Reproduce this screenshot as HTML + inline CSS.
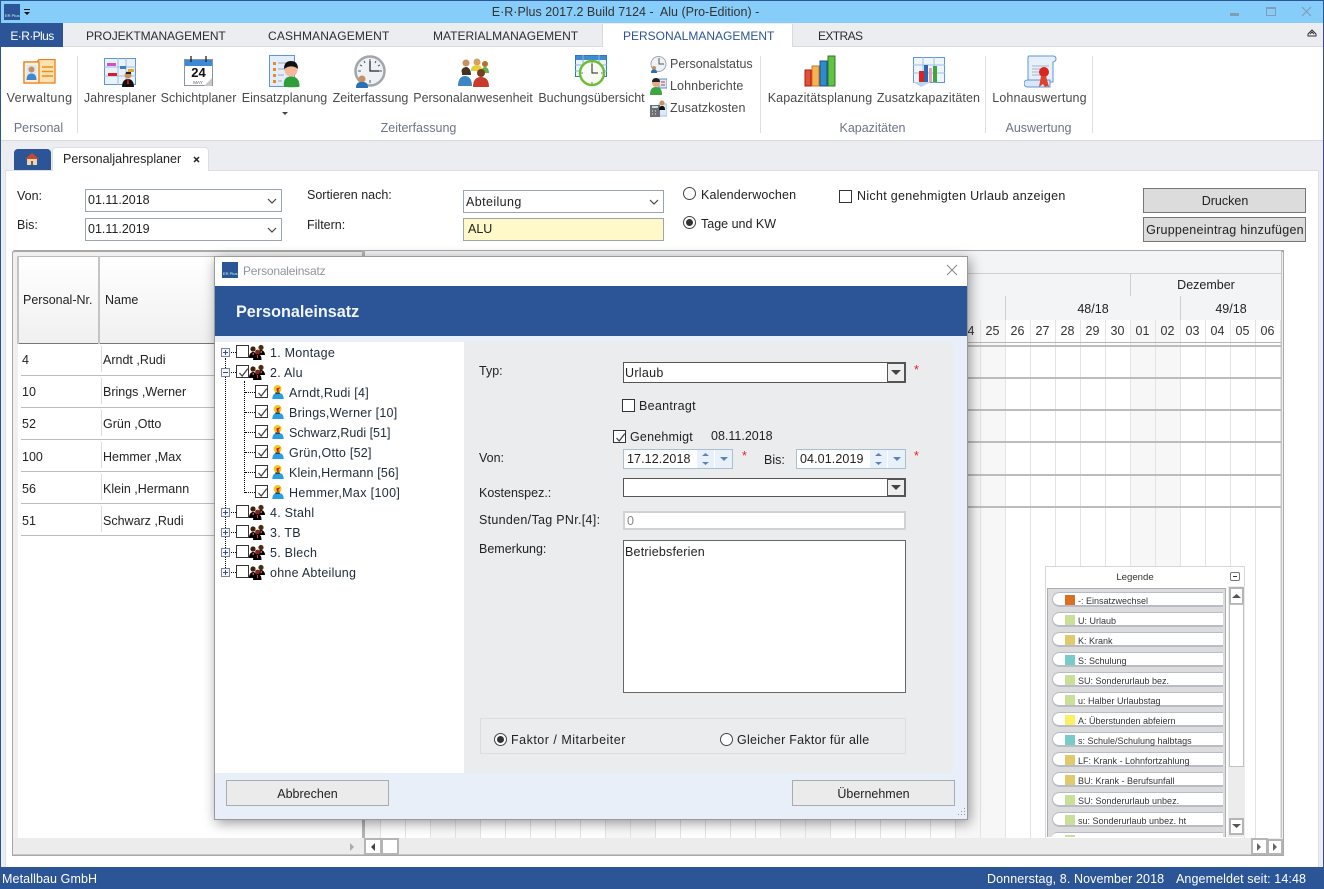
<!DOCTYPE html>
<html lang="de"><head><meta charset="utf-8"><title>E·R·Plus</title>
<style>
html,body{margin:0;padding:0}
body{width:1324px;height:889px;position:relative;overflow:hidden;background:#ebedf0;font-family:"Liberation Sans",sans-serif;font-size:12.5px;color:#222}
div,svg,span.t{position:absolute;box-sizing:border-box}
.t{white-space:nowrap;line-height:16px;height:16px}
.c{transform:translateX(-50%)}
.rb{color:#4a4a4a}
.gl{color:#6d7487}
.tb{color:#2d2d2d;font-size:12px}
.sep{width:1px;top:56px;height:77px;background:#dcdee2}
.in{background:#fff;border:1px solid #9aa5b1}
.cb{width:13px;height:13px;background:#fff;border:1px solid #333}
.cb svg{left:1px;top:1px}
.rad{width:13px;height:13px;border:1px solid #444;border-radius:50%;background:#fff}
.rad i{position:absolute;left:2px;top:2px;width:7px;height:7px;background:#333;border-radius:50%}
.vl{width:1px;background:#e3e3e3}
.hl{height:2px;background:#bcbcbc}
.pill{left:1052px;width:171px;height:15px;background:#fff;border-bottom:2px solid #b9bcc8;border-top:1px solid #b9bcc8;border-radius:8px 0 0 8px;border-left:1px solid #b9bcc8}
.sw{left:1065px;width:10px;height:10px}
.lg{left:1078px;font-size:9px;color:#333}
.d{text-align:center;width:25px;color:#333}
.dot{border-left:1px dotted #000}
.doth{border-top:1px dotted #000;height:1px}
.exp{left:221px;width:9px;height:9px;background:#f4f6fa;border:1px solid #7b8494}
.exp:before{content:"";position:absolute;left:1px;top:3px;width:5px;height:1px;background:#2f4f8f}
.exp.p:after{content:"";position:absolute;left:3px;top:1px;width:1px;height:5px;background:#2f4f8f}
.tr{color:#1d2b3a;letter-spacing:.25px}
.btn{background:#ebebeb;border:1px solid #a8acb2;text-align:center;color:#222}
.sbtn{background:#fff;border:2px solid #b5b5b5}
.st{color:#fff;letter-spacing:.1px}
</style></head>
<body>
<svg width="0" height="0" style="position:absolute">
<defs>
<symbol id="grp" viewBox="0 0 16 16"><circle cx="4" cy="5" r="2.600" fill="#3a2410"/><path d="M0 14c0-4 2-6 4-6s4 2 4 6z" fill="#000"/><circle cx="12" cy="3.500" r="2.600" fill="#4a2e12"/><path d="M8 11c0-3 2-5 4-5s4 2 4 5z" fill="#000"/><circle cx="8.500" cy="8" r="2.400" fill="#7a2a18"/><path d="M4 16c0-4 2-6 4.500-6s4 2 4 6z" fill="#000"/><rect x="3.500" y="9" width="1.500" height="2" fill="#e33"/><rect x="11.500" y="7" width="1.500" height="2" fill="#e33"/><rect x="8" y="11" width="1" height="3" fill="#e33"/></symbol>
<symbol id="per" viewBox="0 0 16 16"><circle cx="7.500" cy="4.500" r="4.500" fill="#f5c81e"/><path d="M1.500 16c0-5 2.500-7 6.500-7s6.500 2 6.500 7z" fill="#2a9ee0"/><path d="M6 4l5-1.500-3 3.500 2.500 1-3.500 1z" fill="#b81c1c"/><rect x="5" y="8.500" width="5" height="1.500" fill="#222"/></symbol>
<symbol id="chk" viewBox="0 0 11 11"><path d="M1.500 6l2.700 3L9.800 1.600" fill="none" stroke="#444" stroke-width="1.300"/></symbol>
</defs>
</svg>

<!-- title bar -->
<div style="left:0;top:0;width:1324px;height:23px;background:#87cdfa;border-top:1px solid #2b5597"></div>
<div style="left:4px;top:4px;width:16px;height:16px;background:#2b5597"></div>
<span class="t" style="left:5px;top:13px;font-size:4px;line-height:6px;height:6px;color:#cfe;">ER Plus</span>
<svg style="left:23px;top:9px" width="8" height="7"><rect x="1" y="0" width="6" height="1" fill="#111"/><path d="M1 3h6l-3 3z" fill="#111"/></svg>
<span class="t c" style="left:625.500px;top:4px;color:#333">E·R·Plus 2017.2 Build 7124 -&nbsp; Alu (Pro-Edition) -</span>
<div style="left:1230px;top:13px;width:9px;height:3px;background:#7f9db5"></div>
<div style="left:1266px;top:7px;width:10px;height:9px;border:1px solid #7f9db5;border-top-width:2px"></div>
<svg style="left:1301px;top:6px" width="11" height="11"><path d="M1 1l9 9M10 1l-9 9" stroke="#7f9db5" stroke-width="1.200"/></svg>

<!-- tabs -->
<div style="left:0;top:23px;width:1324px;height:24px;background:#ebedf0;border-bottom:1px solid #d8dade"></div>
<div style="left:1px;top:23px;width:62px;height:24px;background:#2b5597"></div>
<span class="t c" style="left:32px;top:28px;color:#fff;font-size:12px;letter-spacing:-.6px">E·R·Plus</span>
<span class="t tb" style="left:86px;top:28px;letter-spacing:-.1px">PROJEKTMANAGEMENT</span>
<span class="t tb" style="left:268px;top:28px;letter-spacing:.15px">CASHMANAGEMENT</span>
<span class="t tb" style="left:433px;top:28px">MATERIALMANAGEMENT</span>
<div style="left:602px;top:24px;width:191px;height:24px;background:#fff;border-left:1px solid #d8dade;border-right:1px solid #d8dade"></div>
<span class="t tb" style="left:623px;top:28px;color:#2b5597">PERSONALMANAGEMENT</span>
<span class="t tb" style="left:818px;top:28px;letter-spacing:-.6px">EXTRAS</span>
<svg style="left:1307px;top:29px" width="10" height="9"><path d="M1 5l4-4 4 4v2H1z" fill="none" stroke="#333"/><path d="M3 5l2-2 2 2" fill="none" stroke="#333"/></svg>

<!-- ribbon -->
<div style="left:1px;top:47px;width:1322px;height:94px;background:#fff;border-bottom:1px solid #d8dade"></div>
<div class="sep" style="left:77px"></div><div class="sep" style="left:760px"></div><div class="sep" style="left:985px"></div><div class="sep" style="left:1092px"></div>

<svg style="left:23px;top:59px" width="33" height="25" viewBox="0 0 33 25"><path d="M1 3h13l2-2.500h16V24H1z" fill="#fbe2ae" stroke="#ea7f1e" stroke-width="1.300"/><rect x="1" y="3" width="15" height="21" fill="#fdf0d4" stroke="#ea7f1e" stroke-width="1.300"/><rect x="3.500" y="6" width="10" height="15" fill="#d7e7f6"/><circle cx="8.500" cy="10.500" r="3" fill="#c98c60"/><path d="M3.500 21c0-5 2.500-6.500 5-6.500s5 1.500 5 6.500z" fill="#3f88cc"/><path d="M19 8h11M19 12.500h11M19 17h11" stroke="#ea8f20" stroke-width="1.600"/></svg>
<svg style="left:104px;top:58px" width="32" height="29" viewBox="0 0 32 29"><rect x=".5" y=".5" width="31" height="26" fill="#e9f2fb" stroke="#5f97d2"/><path d="M0 9h32M0 18h32M14 0v27M22 0v27" stroke="#9dbfe3"/><rect x="3" y="5" width="9" height="3" fill="#d84fc0"/><rect x="16" y="8" width="6" height="3" fill="#3d7fc2"/><rect x="24" y="11" width="6" height="3" fill="#e5a72b"/><rect x="4" y="15" width="9" height="3" fill="#d81e1e"/><circle cx="24" cy="17" r="3.500" fill="#c9905f"/><path d="M22 14h5v2h-5z" fill="#222"/><path d="M18 29c0-6 3-8 6-8s6 2 6 8z" fill="#111"/><path d="M23.500 21h1l.6 5h-2.200z" fill="#c22"/></svg>
<svg style="left:184px;top:56px" width="29" height="31" viewBox="0 0 29 31"><rect x=".5" y="3.500" width="28" height="26" fill="#fff" stroke="#8a95a1"/><rect x="1" y="4" width="27" height="6" fill="#3f88d6"/><path d="M7 0v6M22 0v6" stroke="#222" stroke-width="1.300"/><path d="M20 30l8-8v8z" fill="#c8c8c8"/><text x="14.500" y="21" text-anchor="middle" font-family="Liberation Sans" font-weight="bold" font-size="13" fill="#111">24</text><text x="14" y="28" text-anchor="middle" font-family="Liberation Sans" font-size="4.500" fill="#555">MAY</text></svg>
<svg style="left:269px;top:55px" width="33" height="33" viewBox="0 0 33 33"><rect x=".5" y=".5" width="25" height="31" fill="#e2eefb" stroke="#5f97d2"/><g fill="#f08a20"><rect x="4" y="7" width="3" height="3"/><rect x="4" y="13" width="3" height="3"/><rect x="4" y="19" width="3" height="3"/><rect x="4" y="25" width="3" height="3"/></g><path d="M9 8h12M9 14h8M9 20h6M9 26h4" stroke="#9aa5b1"/><circle cx="22" cy="15" r="6.500" fill="#f3b79a"/><path d="M15 14c0-6 3-8 7-8s7 2 7 8c-3-3-9-4-14 0z" fill="#111"/><path d="M15 31.500c-1-8 3-10 7-10s9 2 8.500 10c0 1-15.500 1-15.500 0z" fill="#2f9e3a"/></svg>
<svg style="left:354px;top:55px" width="32" height="33" viewBox="0 0 32 33"><circle cx="16" cy="16" r="14.500" fill="#eef2f6" stroke="#a0a6ac" stroke-width="2.500"/><path d="M16 4v3M16 25v3M4 16h3M25 16h3M10 6l1 2M22 6l-1 2M6 10l2 1M26 10l-2 1" stroke="#555"/><path d="M16 6v10h9" fill="none" stroke="#222" stroke-width="1.200"/><circle cx="8" cy="24" r="3.500" fill="#c9905f"/><path d="M2 33c0-5 2-6 6-6s6 1 6 6z" fill="#2a70b8"/></svg>
<svg style="left:457px;top:57px" width="32" height="30" viewBox="0 0 32 30"><circle cx="9" cy="6" r="3.500" fill="#c9905f"/><circle cx="20" cy="5" r="3.500" fill="#d6a060"/><circle cx="28" cy="7" r="3" fill="#b5702a"/><path d="M5 18c0-6 2-8 4-8s5 2 5 8z" fill="#333"/><path d="M14 14c0-5 3-6 6-6s5 1 5 6z" fill="#e6cf3a"/><path d="M24 16c0-4 2-6 4-6s4 2 4 6z" fill="#66b04a"/><circle cx="8" cy="14" r="3.500" fill="#4a3020"/><path d="M1 29c0-7 3-10 7-10s7 3 7 10z" fill="#3c86c6"/><circle cx="24" cy="16" r="4" fill="#7a3f20"/><path d="M16 30c0-7 3-10 8-10s8 3 8 10z" fill="#c93a2a"/></svg>
<svg style="left:575px;top:55px" width="33" height="32" viewBox="0 0 33 32"><rect x=".5" y=".5" width="31" height="21" fill="#e9f3fb" stroke="#2f78bd"/><rect x="1" y="1" width="30" height="4" fill="#3f8ad0"/><path d="M0 10h32M0 16h32M8 0v21M24 0v21" stroke="#88b5dd"/><circle cx="17" cy="18" r="12" fill="#f8fbf4" stroke="#6cbc35" stroke-width="2.400"/><path d="M17 9v9h6" fill="none" stroke="#222"/><path d="M17 7.500v1.500M17 27v1.500M6.500 18h1.500M26 18h1.500" stroke="#666"/></svg>
<svg style="left:650px;top:56px" width="17" height="17" viewBox="0 0 17 17"><circle cx="8.500" cy="8" r="7.500" fill="#eef2f6" stroke="#a0a6ac"/><path d="M9 2v6h5" fill="none" stroke="#555"/><circle cx="4" cy="12" r="2" fill="#c9905f"/><path d="M1 17c0-3 1-3.500 3-3.500s3 .5 3 3.500z" fill="#2a70b8"/></svg>
<svg style="left:650px;top:78px" width="17" height="17" viewBox="0 0 17 17"><rect x="9" y="1" width="8" height="9" fill="#dce9f8" stroke="#5a8fd0"/><path d="M11 4h4M11 7h4" stroke="#c33"/><circle cx="6" cy="5" r="4" fill="#e5ab8a"/><path d="M2 4c0-3 2-4 4-4s4 1 4 4z" fill="#222"/><path d="M0 17c0-6 2-8 6-8s6 2 6 8z" fill="#3fa63f"/></svg>
<svg style="left:650px;top:100px" width="17" height="17" viewBox="0 0 17 17"><rect x="9" y="4" width="8" height="12" fill="#dce9f8" stroke="#9dbfe3"/><rect x="0" y="5" width="10" height="12" fill="#6c6f73"/><path d="M2 7h6" stroke="#cde" stroke-width="2"/><path d="M2 11h1M5 11h1M2 14h1M5 14h1" stroke="#eee"/><circle cx="12" cy="3" r="2.500" fill="#c9905f"/><path d="M9 10c0-3 1-4 3-4s3 1 3 4z" fill="#111"/></svg>
<svg style="left:804px;top:55px" width="33" height="32" viewBox="0 0 33 32"><rect x="1" y="15" width="6" height="16" fill="#e2503c" stroke="#a81c14"/><rect x="8" y="11" width="7" height="20" fill="#f7b256" stroke="#c97a1c"/><rect x="16" y="6" width="7" height="25" fill="#2f8ccc" stroke="#174f8c"/><rect x="24" y="1" width="7" height="30" fill="#62c244" stroke="#2f7a24"/></svg>
<svg style="left:913px;top:57px" width="33" height="30" viewBox="0 0 33 30"><rect x=".5" y=".5" width="31" height="25" fill="#eef5fc" stroke="#5f97d2"/><path d="M0 8h32M0 16h32M10 0v26M21 0v26" stroke="#9dc0e6"/><rect x="6" y="14" width="5" height="11" fill="#d22"/><rect x="11" y="8" width="4" height="17" fill="#2d66b5"/><rect x="16" y="11" width="3" height="14" fill="#e5a0c0"/><rect x="20" y="9" width="4" height="16" fill="#3aa83a"/><path d="M0 25l8 5 10-5z" fill="#bcd5f0"/></svg>
<svg style="left:1024px;top:55px" width="33" height="33" viewBox="0 0 33 33"><path d="M5 1h24c2 0 3 1 3 3s-2 3-3 3v20H4V3c0-1 0-2 1-2z" fill="#e7f0fa" stroke="#5f97d2"/><path d="M0 28c0-2 2-3 4-3h22v7H3c-2 0-3-2-3-4z" fill="#d6e7f8" stroke="#5f97d2"/><path d="M8 11h17M8 14h12M8 17h10M8 20h10" stroke="#aab4c2"/><circle cx="20" cy="17" r="5" fill="#d7261e"/><path d="M17 21l-2 11 4-3 2 3 2-1 2 1-3-11z" fill="#e0412c"/></svg>

<span class="t c rb" style="left:39.500px;top:90px;letter-spacing:.4px">Verwaltung</span>
<span class="t c rb" style="left:120px;top:90px">Jahresplaner</span>
<span class="t c rb" style="left:198.500px;top:90px">Schichtplaner</span>
<span class="t c rb" style="left:284.500px;top:90px">Einsatzplanung</span>
<svg style="left:282px;top:112px" width="6" height="4"><path d="M0 0h6l-3 3z" fill="#444"/></svg>
<span class="t c rb" style="left:370.500px;top:90px">Zeiterfassung</span>
<span class="t c rb" style="left:473px;top:90px">Personalanwesenheit</span>
<span class="t c rb" style="left:591.500px;top:90px">Buchungsübersicht</span>
<span class="t rb" style="left:670px;top:56px">Personalstatus</span>
<span class="t rb" style="left:670px;top:78px;letter-spacing:.1px">Lohnberichte</span>
<span class="t rb" style="left:670px;top:100px;letter-spacing:.1px">Zusatzkosten</span>
<span class="t c rb" style="left:820px;top:90px;letter-spacing:.1px">Kapazitätsplanung</span>
<span class="t c rb" style="left:928.500px;top:90px;letter-spacing:.1px">Zusatzkapazitäten</span>
<span class="t c rb" style="left:1039.500px;top:90px;letter-spacing:.15px">Lohnauswertung</span>
<span class="t c gl" style="left:38.500px;top:120px">Personal</span>
<span class="t c gl" style="left:418.500px;top:120px">Zeiterfassung</span>
<span class="t c gl" style="left:872.500px;top:120px">Kapazitäten</span>
<span class="t c gl" style="left:1038.500px;top:120px">Auswertung</span>

<!-- document tabs -->
<div style="left:14px;top:149px;width:37px;height:21px;background:#2b5597;border-radius:4px 4px 0 0"></div>
<svg style="left:24px;top:152px" width="16" height="14" viewBox="0 0 16 14"><path d="M1 7l7-6 7 6z" fill="#c8482c"/><rect x="3" y="7" width="10" height="6" fill="#e8d8b8"/><rect x="7" y="9" width="2" height="4" fill="#8a5a30"/></svg>
<div style="left:52px;top:147px;width:157px;height:24px;background:#fff;border:1px solid #dcdee2;border-bottom:0;border-radius:4px 4px 0 0;z-index:2"></div>
<span class="t" style="left:63px;top:151px;color:#222;z-index:3">Personaljahresplaner</span>
<svg style="left:193px;top:156px;z-index:3" width="7" height="7"><path d="M1 1l5 5M6 1L1 6" stroke="#222" stroke-width="1.500"/></svg>

<!-- page -->
<div style="left:5px;top:170px;width:1314px;height:697px;background:#fff;border-top:1px solid #dcdee2;border-right:1px solid #dcdee2;border-left:1px solid #dcdee2"></div>

<span class="t" style="left:17px;top:188px">Von:</span>
<span class="t" style="left:17px;top:217px">Bis:</span>
<div class="in" style="left:85px;top:189px;width:197px;height:23px"></div>
<span class="t" style="left:88px;top:192px">01.11.2018</span>
<svg style="left:267px;top:198px" width="10" height="6"><path d="M1 1l4 4 4-4" fill="none" stroke="#444" stroke-width="1.200"/></svg>
<div class="in" style="left:85px;top:218px;width:197px;height:23px"></div>
<span class="t" style="left:88px;top:221px">01.11.2019</span>
<svg style="left:267px;top:227px" width="10" height="6"><path d="M1 1l4 4 4-4" fill="none" stroke="#444" stroke-width="1.200"/></svg>
<span class="t" style="left:307px;top:187px">Sortieren nach:</span>
<span class="t" style="left:307px;top:217px">Filtern:</span>
<div class="in" style="left:463px;top:190px;width:201px;height:23px"></div>
<span class="t" style="left:466px;top:194px;letter-spacing:.4px">Abteilung</span>
<svg style="left:649px;top:199px" width="10" height="6"><path d="M1 1l4 4 4-4" fill="none" stroke="#444" stroke-width="1.200"/></svg>
<div class="in" style="left:463px;top:218px;width:201px;height:23px;background:#fff8c9"></div>
<span class="t" style="left:468px;top:221px">ALU</span>
<div class="rad" style="left:683px;top:187px"></div>
<span class="t" style="left:701px;top:187px;letter-spacing:.15px">Kalenderwochen</span>
<div class="rad" style="left:683px;top:216px"><i></i></div>
<span class="t" style="left:701px;top:216px">Tage und KW</span>
<div class="cb" style="left:839px;top:190px"></div>
<span class="t" style="left:857px;top:188px;letter-spacing:.3px">Nicht genehmigten Urlaub anzeigen</span>
<div style="left:1143px;top:188px;width:163px;height:25px;background:#dcdcdc;border:1px solid #777"></div>
<span class="t c" style="left:1225px;top:193px">Drucken</span>
<div style="left:1143px;top:217px;width:163px;height:25px;background:#dcdcdc;border:1px solid #777"></div>
<span class="t c" style="left:1225px;top:222px;letter-spacing:.25px">Gruppeneintrag hinzufügen</span>

<!-- grid container -->
<div style="left:12px;top:250px;width:1272px;height:606px;background:#f0f0f0;border:1px solid #a8a8a8;border-top:2px solid #a8a8a8;border-radius:3px 0 0 0"></div>
<div style="left:18px;top:256px;width:344px;height:88px;background:linear-gradient(#fff,#f0f0f0);border-top:1px solid #bbb;border-bottom:1px solid #777"></div>
<div style="left:17px;top:256px;width:2px;height:88px;background:#c4c4c4"></div>
<div style="left:98px;top:256px;width:2px;height:88px;background:#c4c4c4"></div>
<span class="t" style="left:23px;top:292px">Personal-Nr.</span>
<span class="t" style="left:105px;top:292px">Name</span>
<div style="left:18px;top:344px;width:344px;height:494px;background:#fff"></div>
<div style="left:362px;top:250px;width:3px;height:588px;background:#b4b4b4"></div>
<div style="left:365px;top:251px;width:917px;height:91px;background:#f3f4f6"></div>
<div style="left:365px;top:273px;width:916px;height:1px;background:#cfcfcf"></div>
<div style="left:1130px;top:273px;width:1px;height:23px;background:#cfcfcf"></div>
<div style="left:1005px;top:296px;width:1px;height:24px;background:#cfcfcf"></div>
<div style="left:1180px;top:296px;width:1px;height:24px;background:#cfcfcf"></div>
<div style="left:1281px;top:251px;width:1px;height:587px;background:#c4c4c4"></div>
<span class="t c" style="left:1206px;top:277px">Dezember</span>
<span class="t c" style="left:1093px;top:301px">48/18</span>
<span class="t c" style="left:1231px;top:301px">49/18</span>

<!-- right grid -->
<div style="left:365px;top:320px;width:916px;height:518px;background:#fff"></div>
<div style="left:365px;top:320px;width:16px;height:518px;background:#f7f7f7"></div>
<div style="left:430px;top:320px;width:50px;height:518px;background:#f7f7f7"></div>
<div style="left:605px;top:320px;width:50px;height:518px;background:#f7f7f7"></div>
<div style="left:780px;top:320px;width:50px;height:518px;background:#f7f7f7"></div>
<div style="left:955px;top:320px;width:50px;height:518px;background:#f7f7f7"></div>
<div style="left:1130px;top:320px;width:50px;height:518px;background:#f7f7f7"></div>
<div style="left:380px;top:320px;width:901px;height:518px;background:repeating-linear-gradient(90deg,#e3e3e3 0,#e3e3e3 1px,transparent 1px,transparent 25px)"></div>
<div style="left:365px;top:342px;width:916px;height:1px;background:#b5b5b5"></div>
<div class="hl" style="left:365px;top:345px;width:916px"></div>
<div class="hl" style="left:365px;top:377px;width:916px"></div>
<div class="hl" style="left:365px;top:409px;width:916px"></div>
<div class="hl" style="left:365px;top:441px;width:916px"></div>
<div class="hl" style="left:365px;top:474px;width:916px"></div>
<div class="hl" style="left:365px;top:506px;width:916px"></div>
<span class="t d" style="left:955px;top:323px">24</span>
<span class="t d" style="left:980px;top:323px">25</span>
<span class="t d" style="left:1005px;top:323px">26</span>
<span class="t d" style="left:1030px;top:323px">27</span>
<span class="t d" style="left:1055px;top:323px">28</span>
<span class="t d" style="left:1080px;top:323px">29</span>
<span class="t d" style="left:1105px;top:323px">30</span>
<span class="t d" style="left:1130px;top:323px">01</span>
<span class="t d" style="left:1155px;top:323px">02</span>
<span class="t d" style="left:1180px;top:323px">03</span>
<span class="t d" style="left:1205px;top:323px">04</span>
<span class="t d" style="left:1230px;top:323px">05</span>
<span class="t d" style="left:1255px;top:323px">06</span>

<!-- left rows -->
<div style="left:21px;top:375px;width:340px;height:1px;background:#bdbdbd"></div>
<div style="left:21px;top:407px;width:340px;height:1px;background:#bdbdbd"></div>
<div style="left:21px;top:439px;width:340px;height:1px;background:#bdbdbd"></div>
<div style="left:21px;top:471px;width:340px;height:1px;background:#bdbdbd"></div>
<div style="left:21px;top:503px;width:340px;height:1px;background:#bdbdbd"></div>
<div style="left:21px;top:535px;width:340px;height:1px;background:#bdbdbd"></div>
<div style="left:101px;top:346px;width:1px;height:190px;background:repeating-linear-gradient(180deg,#dcdcdc 0,#dcdcdc 26px,transparent 26px,transparent 32px)"></div>
<span class="t" style="left:22px;top:352px">4</span><span class="t" style="left:103px;top:352px">Arndt ,Rudi</span>
<span class="t" style="left:22px;top:384px">10</span><span class="t" style="left:103px;top:384px">Brings ,Werner</span>
<span class="t" style="left:22px;top:416px">52</span><span class="t" style="left:103px;top:416px">Grün ,Otto</span>
<span class="t" style="left:22px;top:449px">100</span><span class="t" style="left:103px;top:449px">Hemmer ,Max</span>
<span class="t" style="left:22px;top:481px">56</span><span class="t" style="left:103px;top:481px">Klein ,Hermann</span>
<span class="t" style="left:22px;top:513px">51</span><span class="t" style="left:103px;top:513px">Schwarz ,Rudi</span>

<!-- scrollbars -->
<div style="left:13px;top:838px;width:1270px;height:17px;background:#ececec;border-bottom:1px solid #c8c8c8"></div>
<svg style="left:350px;top:843px" width="5" height="8"><path d="M0 0l4 4-4 4z" fill="#aaa"/></svg>
<div class="sbtn" style="left:364px;top:838px;width:18px;height:17px"></div>
<svg style="left:371px;top:843px" width="5" height="8"><path d="M4 0L0 4l4 4z" fill="#444"/></svg>
<div class="sbtn" style="left:381px;top:838px;width:18px;height:17px"></div>
<div class="sbtn" style="left:1251px;top:838px;width:17px;height:17px"></div>
<svg style="left:1257px;top:843px" width="5" height="8"><path d="M0 0l4 4-4 4z" fill="#666"/></svg>
<div class="sbtn" style="left:1267px;top:839px;width:16px;height:16px"></div>
<svg style="left:1273px;top:843px" width="5" height="8"><path d="M0 0l4 4-4 4z" fill="#666"/></svg>

<!-- legend -->
<div style="left:1045px;top:566px;width:200px;height:272px;background:#fff;border:1px solid #d8d8d8;border-bottom:0"></div>
<span class="t c" style="left:1135px;top:570px;font-size:9.600px;color:#333">Legende</span>
<div style="left:1230px;top:572px;width:10px;height:9px;border:1px solid #777;border-radius:2px;background:#fff"></div>
<div style="left:1233px;top:576px;width:4px;height:1px;background:#333"></div>
<div style="left:1047px;top:588px;width:179px;height:249px;background:#dcdcdc;border:1px solid #a8acb4;border-bottom:0;overflow:hidden"></div>
<div style="left:1228px;top:586px;width:17px;height:251px;background:#ececec"></div>
<div class="sbtn" style="left:1229px;top:587px;width:15px;height:18px"></div>
<svg style="left:1232px;top:594px" width="9" height="5"><path d="M0 4l4.500-4L9 4z" fill="#555"/></svg>
<div style="left:1229px;top:604px;width:15px;height:163px;background:#fff;border:1px solid #c0c0c0"></div>
<div class="sbtn" style="left:1229px;top:818px;width:15px;height:17px"></div>
<svg style="left:1232px;top:824px" width="9" height="5"><path d="M0 0l4.500 4L9 0z" fill="#555"/></svg>

<div class="pill" style="top:592px"></div><div class="sw" style="top:595px;background:#d96f20"></div><span class="t lg" style="top:593px">-: Einsatzwechsel</span>
<div class="pill" style="top:612px"></div><div class="sw" style="top:615px;background:#cadf98"></div><span class="t lg" style="top:613px">U: Urlaub</span>
<div class="pill" style="top:632px"></div><div class="sw" style="top:635px;background:#dfca6c"></div><span class="t lg" style="top:633px">K: Krank</span>
<div class="pill" style="top:652px"></div><div class="sw" style="top:655px;background:#78cbc9"></div><span class="t lg" style="top:653px">S: Schulung</span>
<div class="pill" style="top:672px"></div><div class="sw" style="top:675px;background:#cadf98"></div><span class="t lg" style="top:673px">SU: Sonderurlaub bez.</span>
<div class="pill" style="top:692px"></div><div class="sw" style="top:695px;background:#cadf98"></div><span class="t lg" style="top:693px">u: Halber Urlaubstag</span>
<div class="pill" style="top:712px"></div><div class="sw" style="top:715px;background:#fbf060"></div><span class="t lg" style="top:713px">A: Überstunden abfeiern</span>
<div class="pill" style="top:732px"></div><div class="sw" style="top:735px;background:#78cbc9"></div><span class="t lg" style="top:733px">s: Schule/Schulung halbtags</span>
<div class="pill" style="top:752px"></div><div class="sw" style="top:755px;background:#dfca6c"></div><span class="t lg" style="top:753px">LF: Krank - Lohnfortzahlung</span>
<div class="pill" style="top:772px"></div><div class="sw" style="top:775px;background:#dfca6c"></div><span class="t lg" style="top:773px">BU: Krank - Berufsunfall</span>
<div class="pill" style="top:792px"></div><div class="sw" style="top:795px;background:#cadf98"></div><span class="t lg" style="top:793px">SU: Sonderurlaub unbez.</span>
<div class="pill" style="top:812px"></div><div class="sw" style="top:815px;background:#cadf98"></div><span class="t lg" style="top:813px">su: Sonderurlaub unbez. ht</span>
<div style="left:1052px;top:832px;width:171px;height:5px;background:#fff;border-top:1px solid #b9bcc8;border-radius:5px 0 0 0"></div>
<div class="sw" style="top:835px;height:2px;background:#cadf98"></div>

<!-- dialog -->
<div style="left:214px;top:256px;width:754px;height:564px;background:#e8eff9;border:1px solid #9a9a9a;box-shadow:2px 3px 12px rgba(0,0,0,.4);z-index:5">
 <div style="left:0;top:0;width:752px;height:29px;background:#fff"></div>
 <div style="left:7px;top:5px;width:16px;height:16px;background:#2b5597"></div>
 <span class="t" style="left:8px;top:14px;font-size:4px;line-height:6px;height:6px;color:#cfe">ER Plus</span>
 <span class="t" style="left:28px;top:6px;color:#8f949c;font-size:12px;letter-spacing:-.2px">Personaleinsatz</span>
 <svg style="left:731px;top:7px" width="12" height="12"><path d="M1 1l10 10M11 1L1 11" stroke="#8a8a8a"/></svg>
 <div style="left:0;top:29px;width:752px;height:50px;background:#2b5597"></div>
 <span class="t" style="left:21px;top:47px;color:#f2f6fc;font-size:16.200px;font-weight:bold">Personaleinsatz</span>
 <div style="left:0;top:85px;width:249px;height:431px;background:#fff"></div>
 <div style="left:249px;top:85px;width:489px;height:431px;background:#ebecee"></div>
 <div style="left:265px;top:461px;width:426px;height:36px;border:1px solid #dcdde0"></div>
 <div class="btn" style="left:11px;top:523px;width:163px;height:26px;line-height:26px">Abbrechen</div>
 <div class="btn" style="left:577px;top:523px;width:163px;height:26px;line-height:26px">Übernehmen</div>
 <svg style="left:740px;top:550px" width="11" height="11"><path d="M9 1h1v1H9zM6 4h1v1H6zM9 4h1v1H9zM3 7h1v1H3zM6 7h1v1H6zM9 7h1v1H9z" fill="#999"/></svg>
</div>

<!-- tree -->
<div style="z-index:6;left:0;top:0;width:1324px;height:889px">
 <div class="dot" style="left:225px;top:358px;height:210px"></div>
 <div class="dot" style="left:244px;top:381px;height:112px"></div>
 <div class="doth" style="left:231px;top:352px;width:5px"></div><div class="doth" style="left:231px;top:372px;width:5px"></div>
 <div class="doth" style="left:231px;top:512px;width:5px"></div><div class="doth" style="left:231px;top:532px;width:5px"></div>
 <div class="doth" style="left:231px;top:552px;width:5px"></div><div class="doth" style="left:231px;top:572px;width:5px"></div>
 <div class="doth" style="left:245px;top:392px;width:10px"></div><div class="doth" style="left:245px;top:412px;width:10px"></div>
 <div class="doth" style="left:245px;top:432px;width:10px"></div><div class="doth" style="left:245px;top:452px;width:10px"></div>
 <div class="doth" style="left:245px;top:472px;width:10px"></div><div class="doth" style="left:245px;top:492px;width:10px"></div>

 <div class="exp p" style="top:348px"></div><div class="cb" style="left:236px;top:345px"></div><svg style="left:249px;top:344px" width="16" height="16"><use href="#grp"/></svg><span class="t tr" style="left:270px;top:345px">1. Montage</span>
 <div class="exp" style="top:368px"></div><div class="cb" style="left:236px;top:365px"><svg width="11" height="11"><use href="#chk"/></svg></div><svg style="left:249px;top:364px" width="16" height="16"><use href="#grp"/></svg><span class="t tr" style="left:270px;top:365px">2. Alu</span>
 <div class="cb" style="left:255px;top:385px"><svg width="11" height="11"><use href="#chk"/></svg></div><svg style="left:271px;top:384px" width="14" height="16"><use href="#per"/></svg><span class="t tr" style="left:289px;top:385px">Arndt,Rudi [4]</span>
 <div class="cb" style="left:255px;top:405px"><svg width="11" height="11"><use href="#chk"/></svg></div><svg style="left:271px;top:404px" width="14" height="16"><use href="#per"/></svg><span class="t tr" style="left:289px;top:405px">Brings,Werner [10]</span>
 <div class="cb" style="left:255px;top:425px"><svg width="11" height="11"><use href="#chk"/></svg></div><svg style="left:271px;top:424px" width="14" height="16"><use href="#per"/></svg><span class="t tr" style="left:289px;top:425px;letter-spacing:0">Schwarz,Rudi [51]</span>
 <div class="cb" style="left:255px;top:445px"><svg width="11" height="11"><use href="#chk"/></svg></div><svg style="left:271px;top:444px" width="14" height="16"><use href="#per"/></svg><span class="t tr" style="left:289px;top:445px">Grün,Otto [52]</span>
 <div class="cb" style="left:255px;top:465px"><svg width="11" height="11"><use href="#chk"/></svg></div><svg style="left:271px;top:464px" width="14" height="16"><use href="#per"/></svg><span class="t tr" style="left:289px;top:465px;letter-spacing:.15px">Klein,Hermann [56]</span>
 <div class="cb" style="left:255px;top:485px"><svg width="11" height="11"><use href="#chk"/></svg></div><svg style="left:271px;top:484px" width="14" height="16"><use href="#per"/></svg><span class="t tr" style="left:289px;top:485px;letter-spacing:.35px">Hemmer,Max [100]</span>
 <div class="exp p" style="top:508px"></div><div class="cb" style="left:236px;top:505px"></div><svg style="left:249px;top:504px" width="16" height="16"><use href="#grp"/></svg><span class="t tr" style="left:270px;top:505px">4. Stahl</span>
 <div class="exp p" style="top:528px"></div><div class="cb" style="left:236px;top:525px"></div><svg style="left:249px;top:524px" width="16" height="16"><use href="#grp"/></svg><span class="t tr" style="left:270px;top:525px">3. TB</span>
 <div class="exp p" style="top:548px"></div><div class="cb" style="left:236px;top:545px"></div><svg style="left:249px;top:544px" width="16" height="16"><use href="#grp"/></svg><span class="t tr" style="left:270px;top:545px">5. Blech</span>
 <div class="exp p" style="top:568px"></div><div class="cb" style="left:236px;top:565px"></div><svg style="left:249px;top:564px" width="16" height="16"><use href="#grp"/></svg><span class="t tr" style="left:270px;top:565px">ohne Abteilung</span>

 <!-- form -->
 <span class="t" style="left:479px;top:363px">Typ:</span>
 <div style="left:623px;top:362px;width:283px;height:21px;background:#fff;border:1px solid #555"></div>
 <div style="left:887px;top:363px;width:18px;height:19px;background:#eee;border:1px solid #555"></div>
 <svg style="left:891px;top:370px" width="10" height="5"><path d="M0 0h10L5 5z" fill="#444"/></svg>
 <span class="t" style="left:625px;top:365px;letter-spacing:.3px">Urlaub</span>
 <span class="t" style="left:914px;top:362px;color:#e8202a">*</span>
 <div class="cb" style="left:622px;top:399px"></div>
 <span class="t" style="left:639px;top:398px;letter-spacing:.3px">Beantragt</span>
 <div class="cb" style="left:613px;top:430px"><svg width="11" height="11"><use href="#chk"/></svg></div>
 <span class="t" style="left:630px;top:429px;letter-spacing:.2px">Genehmigt</span>
 <span class="t" style="left:711px;top:428px">08.11.2018</span>
 <span class="t" style="left:479px;top:450px">Von:</span>
 <div style="left:623px;top:449px;width:110px;height:20px;background:#fff;border:1px solid #a9bfd0"></div>
 <div style="left:697px;top:450px;width:35px;height:18px;background:#e8f0fa"></div>
 <div style="left:714px;top:450px;width:1px;height:18px;background:#fff"></div>
 <svg style="left:701px;top:452px" width="9" height="14"><path d="M1 4l3.500-3L8 4zM1 10l3.500 3L8 10z" fill="#5f82b5"/></svg>
 <svg style="left:720px;top:457px" width="8" height="4"><path d="M0 0h8L4 4z" fill="#5f82b5"/></svg>
 <span class="t" style="left:627px;top:451px;letter-spacing:.1px">17.12.2018</span>
 <span class="t" style="left:742px;top:448px;color:#e8202a">*</span>
 <span class="t" style="left:764px;top:452px">Bis:</span>
 <div style="left:796px;top:449px;width:110px;height:20px;background:#fff;border:1px solid #a9bfd0"></div>
 <div style="left:870px;top:450px;width:35px;height:18px;background:#e8f0fa"></div>
 <div style="left:887px;top:450px;width:1px;height:18px;background:#fff"></div>
 <svg style="left:874px;top:452px" width="9" height="14"><path d="M1 4l3.500-3L8 4zM1 10l3.500 3L8 10z" fill="#5f82b5"/></svg>
 <svg style="left:893px;top:457px" width="8" height="4"><path d="M0 0h8L4 4z" fill="#5f82b5"/></svg>
 <span class="t" style="left:800px;top:451px;letter-spacing:.1px">04.01.2019</span>
 <span class="t" style="left:914px;top:448px;color:#e8202a">*</span>
 <span class="t" style="left:479px;top:485px">Kostenspez.:</span>
 <div style="left:623px;top:478px;width:283px;height:19px;background:#fff;border:1px solid #555"></div>
 <div style="left:887px;top:479px;width:18px;height:17px;background:#eee;border:1px solid #555"></div>
 <svg style="left:891px;top:485px" width="10" height="5"><path d="M0 0h10L5 5z" fill="#444"/></svg>
 <span class="t" style="left:479px;top:512px;letter-spacing:.3px">Stunden/Tag PNr.[4]:</span>
 <div style="left:623px;top:511px;width:283px;height:19px;background:#fff;border:2px solid #d0d2d4"></div>
 <span class="t" style="left:627px;top:513px;color:#888">0</span>
 <span class="t" style="left:479px;top:541px">Bemerkung:</span>
 <div style="left:623px;top:540px;width:283px;height:153px;background:#fff;border:1px solid #666"></div>
 <span class="t" style="left:625px;top:544px;letter-spacing:.2px">Betriebsferien</span>
 <div class="rad" style="left:494px;top:733px"><i></i></div>
 <span class="t" style="left:511px;top:732px;letter-spacing:.5px">Faktor / Mitarbeiter</span>
 <div class="rad" style="left:720px;top:733px"></div>
 <span class="t" style="left:737px;top:732px;letter-spacing:.25px">Gleicher Faktor für alle</span>
</div>

<!-- status bar -->
<div style="left:0;top:867px;width:1324px;height:22px;background:#2b5597"></div>
<span class="t st" style="left:2px;top:871px">Metallbau GmbH</span>
<span class="t st" style="left:987px;top:871px">Donnerstag, 8. November 2018</span>
<span class="t st" style="left:1176px;top:871px">Angemeldet seit: 14:48</span>
<div style="left:0;top:0;width:1px;height:889px;background:#2b5597;z-index:9"></div>
<div style="left:1323px;top:0;width:1px;height:889px;background:#2b5597;z-index:9"></div>
</body></html>
